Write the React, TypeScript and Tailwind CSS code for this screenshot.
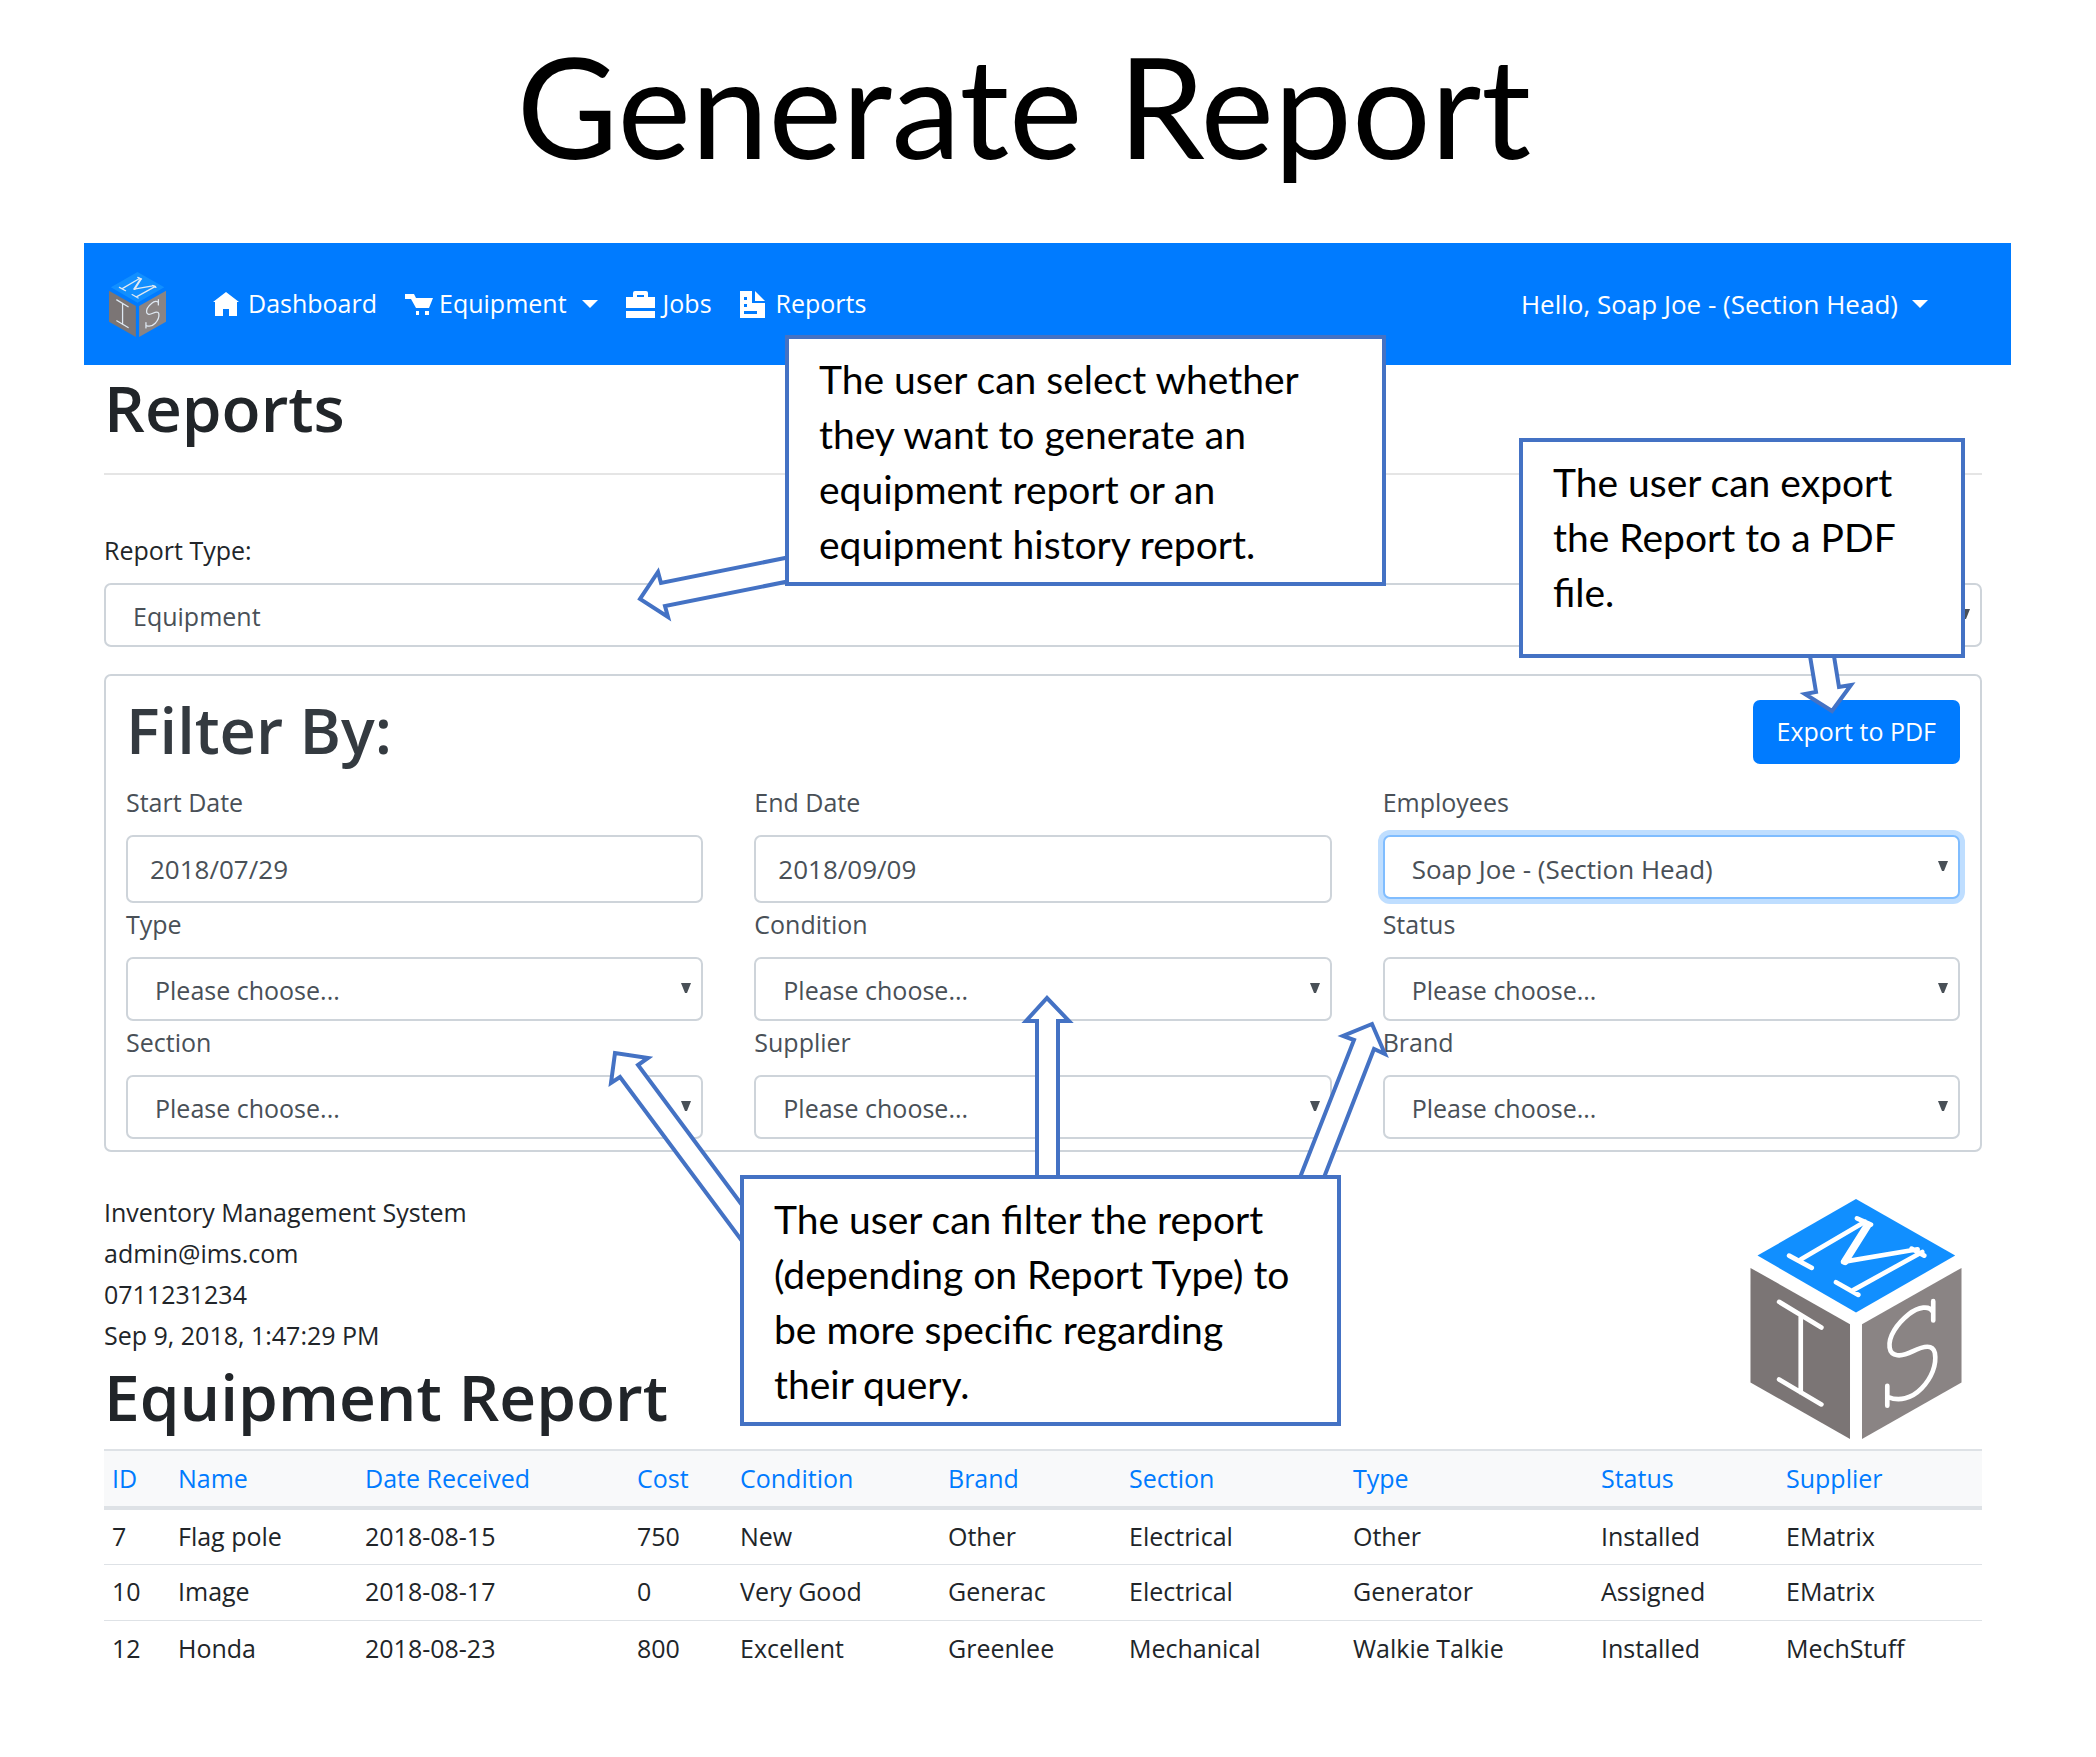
import React from "react";

const bodyFont = "font-['Open_Sans','Noto_Sans',sans-serif]";
const noteFont = "font-['Lato','Open_Sans',sans-serif]";

function Logo({ className, gap }: { className: string; gap: string }) {
  return (
    <svg viewBox="150 117 634 721" className={className} aria-label="IMS logo" role="img">
      <path d="M467 117 765 287 467 458 171 287Z" fill="#118fff" />
      <path d="M150 324 449 493V838L150 668Z" fill="#7b7575" />
      <path d="M784 324 485 493V838L784 668Z" fill="#8a8484" />
      <g fill="none" stroke={gap} strokeLinecap="round" strokeLinejoin="round">
        <path strokeWidth="14" d="M266 287 334 324M302 298 494 185M470 175 512 194M428 306 652 268M634 266 672 287M666 276 460 390M407 367 474 405" />
        <path strokeWidth="23" d="M502 196 434 304" />
        <path strokeWidth="14" d="M236 426 363 503M301 468V698M236 659 363 734" />
        <path
          strokeWidth="14"
          d="M699 424V482M698 456C688 436 655 440 626 463C590 492 564 530 568 563C572 592 603 592 637 575C672 558 698 553 704 580C710 615 694 655 664 686C634 717 596 725 564 712M561 678V738"
        />
      </g>
    </svg>
  );
}

function HomeIcon() {
  return (
    <svg viewBox="0 0 27 24" className="h-6 w-[27px]" fill="#fff">
      <path d="M13 0 26 10H24V24H16V17H10V24H2V10H0Z" />
    </svg>
  );
}

function CartIcon() {
  return (
    <svg viewBox="0 0 28 21" className="h-[21px] w-7" fill="#fff">
      <path d="M0 0H9L11 4H28L24 14H11L6 5H0ZM11 17h3v4h-3ZM20 17h4v4h-4Z" />
    </svg>
  );
}

function BriefcaseIcon() {
  return (
    <svg viewBox="0 0 29 27" className="h-[27px] w-[29px]" fill="#fff">
      <path fillRule="evenodd" d="M0 6H7V2Q7 0 9 0H20Q22 0 22 2V6H29V17H0ZM11 6H18V4H11ZM0 20H29V27H0Z" />
    </svg>
  );
}

function ReportIcon() {
  return (
    <svg viewBox="0 0 26 27" className="h-[27px] w-[26px]" fill="#fff">
      <path fillRule="evenodd" d="M0 0H12V12H25V27H0ZM4 6V9H7V6ZM4 13V16H7V13ZM4 20V23H17V20Z" />
      <path d="M15 0 25 10H15Z" />
    </svg>
  );
}

function Caret() {
  return (
    <svg viewBox="0 0 16 8" className="h-2 w-4" fill="#fff">
      <path d="M0 0H16L8 8Z" />
    </svg>
  );
}

const controlBase =
  "block w-full appearance-none rounded-[7px] border-2 bg-white text-[#495057] outline-none";

function Select({ id, value, focused }: { id: string; value: string; focused?: boolean }) {
  return (
    <div className="relative">
      <select
        id={id}
        className={
          focused
            ? `${controlBase} h-16 border-[#80bdff] pl-[27px] pt-1 text-[26px] ring-[5px] ring-[#bfdeff]`
            : `${controlBase} h-16 border-[#ced4da] pl-[27px] pt-1`
        }
      >
        <option>{value}</option>
      </select>
      <svg viewBox="0 0 10 10" className="pointer-events-none absolute right-3 top-[26px] size-[10px]" fill="#495057">
        <path d="M0 0H10L6 10H4Z" />
      </svg>
    </div>
  );
}

type FieldData = { id: string; label: string; value: string; kind: "date" | "select"; focused?: boolean };

const fieldRows: FieldData[][] = [
  [
    { id: "start", label: "Start Date", value: "2018/07/29", kind: "date" },
    { id: "end", label: "End Date", value: "2018/09/09", kind: "date" },
    { id: "employees", label: "Employees", value: "Soap Joe - (Section Head)", kind: "select", focused: true },
  ],
  [
    { id: "type", label: "Type", value: "Please choose...", kind: "select" },
    { id: "condition", label: "Condition", value: "Please choose...", kind: "select" },
    { id: "status", label: "Status", value: "Please choose...", kind: "select" },
  ],
  [
    { id: "section", label: "Section", value: "Please choose...", kind: "select" },
    { id: "supplier", label: "Supplier", value: "Please choose...", kind: "select" },
    { id: "brand", label: "Brand", value: "Please choose...", kind: "select" },
  ],
];

function Field({ field }: { field: FieldData }) {
  return (
    <div>
      <label htmlFor={field.id} className="mb-3 block leading-[42px]">
        {field.label}
      </label>
      {field.kind === "date" ? (
        <input
          id={field.id}
          defaultValue={field.value}
          className={`${controlBase} h-[68px] border-[#ced4da] px-[22px] text-[26px]`}
        />
      ) : (
        <Select id={field.id} value={field.value} focused={field.focused} />
      )}
    </div>
  );
}

const columns = [
  { name: "ID", width: "w-[66px]" },
  { name: "Name", width: "w-[187px]" },
  { name: "Date Received", width: "w-[272px]" },
  { name: "Cost", width: "w-[103px]" },
  { name: "Condition", width: "w-[208px]" },
  { name: "Brand", width: "w-[181px]" },
  { name: "Section", width: "w-[224px]" },
  { name: "Type", width: "w-[248px]" },
  { name: "Status", width: "w-[185px]" },
  { name: "Supplier", width: "w-[204px]" },
];

const rows = [
  ["7", "Flag pole", "2018-08-15", "750", "New", "Other", "Electrical", "Other", "Installed", "EMatrix"],
  ["10", "Image", "2018-08-17", "0", "Very Good", "Generac", "Electrical", "Generator", "Assigned", "EMatrix"],
  ["12", "Honda", "2018-08-23", "800", "Excellent", "Greenlee", "Mechanical", "Walkie Talkie", "Installed", "MechStuff"],
];

function Note({ className, lines }: { className: string; lines: string[] }) {
  return (
    <aside
      className={`absolute border-4 border-[#4472c4] bg-white pl-[30px] pt-[13px] text-[39px] leading-[55px] text-black ${noteFont} ${className}`}
    >
      {lines.map((line) => (
        <p key={line} className="whitespace-nowrap">
          {line}
        </p>
      ))}
    </aside>
  );
}

function Arrows() {
  return (
    <svg
      viewBox="0 0 2096 1757"
      className="pointer-events-none absolute left-0 top-0 w-full"
      fill="#fff"
      stroke="#4472c4"
      strokeWidth="4"
    >
      <path d="M790 557 661 583 658 572 640 599 668 617 665 606 790 581Z" />
      <path d="M1809 650 1816 692 1805 694 1832 711 1851 685 1839 687 1833 650Z" />
      <path d="M745 1209 638 1065 648 1058 615 1053 611 1083 620 1077 745 1245Z" />
      <path d="M1037 1180V1021H1026L1047 998 1069 1021H1058V1180Z" />
      <path d="M1299 1180 1354 1040 1343 1036 1372 1024 1385 1054 1374 1049 1323 1180Z" />
    </svg>
  );
}

export default function App() {
  return (
    <div className={`relative min-h-screen bg-white pb-16 text-[25px] text-[#212529] ${bodyFont}`}>
      <h1 className={`pr-12 pt-[26px] text-center text-[139px] leading-[160px] text-black ${noteFont}`}>Generate Report</h1>

      <div className="ml-[84px] mr-[85px] mt-[57px]">
        <nav className="flex h-[122px] items-center bg-[#007bff] pl-[25px] pr-[83px] text-white">
          <a href="#home" className="mr-[47px]">
            <Logo className="h-[65px] w-[57px]" gap="#dfe9f3" />
          </a>
          <a href="#dashboard" className="mr-7 flex items-center gap-2">
            <HomeIcon />
            Dashboard
          </a>
          <button className="mr-7 flex items-center gap-1.5">
            <CartIcon />
            Equipment
            <span className="ml-[9px]">
              <Caret />
            </span>
          </button>
          <a href="#jobs" className="mr-7 flex items-center gap-2">
            <BriefcaseIcon />
            Jobs
          </a>
          <a href="#reports" className="flex items-center gap-[10px]">
            <ReportIcon />
            Reports
          </a>
          <button className="ml-auto flex items-center gap-[14px] text-[26px]">
            Hello, Soap Joe - (Section Head)
            <Caret />
          </button>
        </nav>

        <main className="ml-5 mr-[29px]">
          <h2 className="pt-0.5 text-[64px] font-semibold leading-[81px]">Reports</h2>
          <hr className="mt-[25px] border-t-2 border-[#e5e5e5]" />

          <div className="mt-[54px]">
            <label htmlFor="report-type" className="mb-3 block leading-[42px]">
              Report Type:
            </label>
            <Select id="report-type" value="Equipment" />
          </div>

          <section className="mt-[27px] rounded-[7px] border-2 border-[#ced4da] px-5 pb-[11px] pt-6 text-[#495057]">
            <div className="flex items-start justify-between">
              <h2 className="text-[63px] font-semibold leading-[59px] text-[#343a40]">Filter By:</h2>
              <button className="h-16 rounded-[7px] bg-[#007bff] px-6 text-white">Export to PDF</button>
            </div>
            <div className="mt-[17px]">
              {fieldRows.map((row) => (
                <div key={row[0].id} className="grid grid-cols-3 gap-x-[51px]">
                  {row.map((f) => (
                    <Field key={f.id} field={f} />
                  ))}
                </div>
              ))}
            </div>
          </section>

          <header className="mt-10 flex items-start justify-between">
            <div>
              <address className="not-italic leading-[41px]">
                <p>Inventory Management System</p>
                <p>admin@ims.com</p>
                <p>0711231234</p>
                <p>Sep 9, 2018, 1:47:29 PM</p>
              </address>
              <h2 className="text-[64px] font-semibold leading-[81px]">Equipment Report</h2>
            </div>
            <Logo className="mr-5 mt-[7px] h-60 w-[212px]" gap="#fff" />
          </header>

          <table className="mt-[10px] w-full table-fixed border-collapse text-left">
            <thead>
              <tr className="h-[58px] border-b-4 border-t-2 border-[#dee2e6] bg-[#f8f9fa] text-[#007bff]">
                {columns.map((c) => (
                  <th key={c.name} className={`whitespace-nowrap pl-2 font-normal ${c.width}`}>
                    {c.name}
                  </th>
                ))}
              </tr>
            </thead>
            <tbody>
              {rows.map((r) => (
                <tr key={r[0]} className="h-14 border-b border-[#dee2e6] last:border-b-0">
                  {r.map((cell, i) => (
                    <td key={i} className="whitespace-nowrap pl-2">
                      {cell}
                    </td>
                  ))}
                </tr>
              ))}
            </tbody>
          </table>
        </main>
      </div>

      <Arrows />
      <Note
        className="left-[785px] top-[335px] w-[601px] pb-[10px]"
        lines={[
          "The user can select whether",
          "they want to generate an",
          "equipment report or an",
          "equipment history report.",
        ]}
      />
      <Note
        className="left-[1519px] top-[438px] w-[446px] pb-[34px]"
        lines={["The user can export", "the Report to a PDF", "file."]}
      />
      <Note
        className="left-[740px] top-[1175px] w-[601px] pb-[10px]"
        lines={[
          "The user can filter the report",
          "(depending on Report Type) to",
          "be more specific regarding",
          "their query.",
        ]}
      />
    </div>
  );
}
